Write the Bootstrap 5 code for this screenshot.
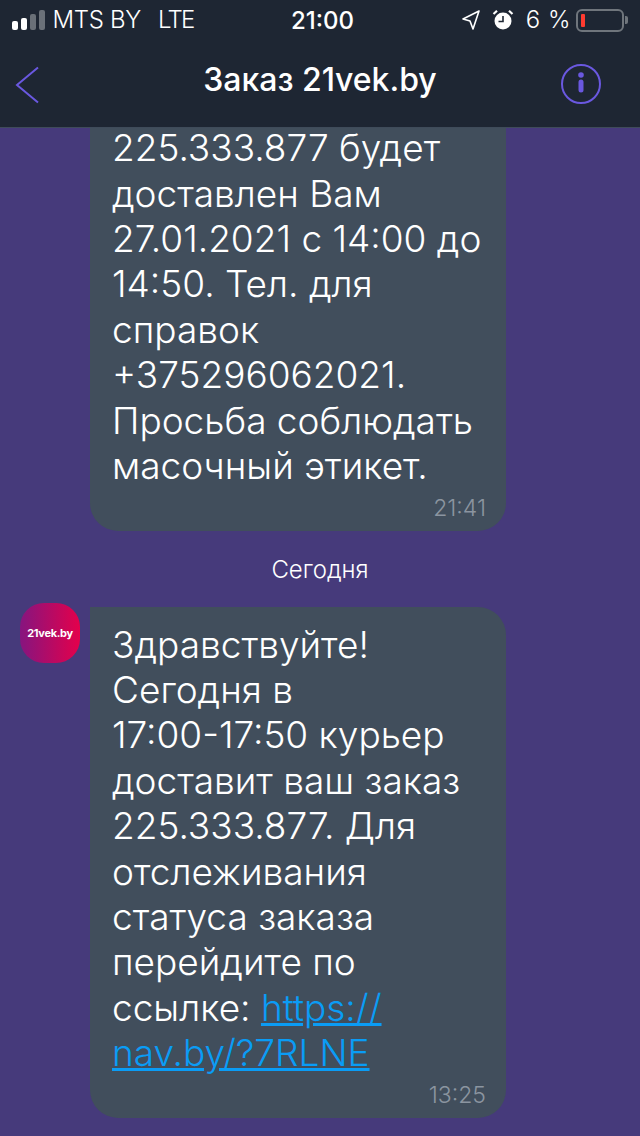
<!DOCTYPE html>
<html lang="ru">
<head>
    <meta charset="UTF-8">
    <meta name="viewport" content="width=device-width, initial-scale=1.0">
    <title>Заказ 21vek.by</title>
    <link href="https://cdn.jsdelivr.net/npm/bootstrap@5.3.0/dist/css/bootstrap.min.css" rel="stylesheet">
    <script src="https://cdn.jsdelivr.net/npm/bootstrap@5.3.0/dist/js/bootstrap.bundle.min.js"></script>
    <style>
        html, body { height: 100%; }
        body { width: 640px; height: 1136px; overflow: hidden; background: #463a7b; font-family: Inter, "Liberation Sans", sans-serif; color: #fff; }
        .top-area { background: #1e2633; height: 128px; border-bottom: 1px solid #3f4b5a; position: relative; z-index: 2; }
        .status-row { height: 40px; padding: 0 12px; font-size: 24px; line-height: 42px; }
        .signal { gap: 3.5px; align-items: flex-end; height: 20px; margin-right: 8px; }
        .signal i { display: block; width: 5.5px; border-radius: 2px; background: #fff; }
        .signal i.off { background: #6a7078; }
        .carrier { letter-spacing: -0.3px; font-weight: 300; }
        .net { margin-left: 17px; font-weight: 300; letter-spacing: -1.8px; }
        .clock { position: absolute; left: 5px; right: 0; text-align: center; font-weight: 500; font-size: 24px; top: 0; line-height: 42px; }
        .status-right { margin-left: auto; gap: 12px; }
        .pct { font-weight: 300; font-size: 24px; letter-spacing: 0.5px; }
        .batt { width: 48px; height: 23px; border: 2px solid #6f757c; border-radius: 6px; padding: 3px; }
        .batt b { display: block; width: 4px; height: 100%; background: #ff3b30; border-radius: 1px; }
        .batt-tip { width: 3px; height: 8px; background: #6f757c; border-radius: 0 2px 2px 0; margin-left: 1px; }
        .batt-group { margin-left: -7px; }
        .nav-row { height: 87px; padding: 0 38px 0 15px; position: relative; }
        .back-arrow { margin-top: 3px; }
        .nav-title { position: absolute; left: 0; right: 0; top: 18px; text-align: center; font-size: 32px; font-weight: 500; line-height: 44px; }
        .chat-area { height: 1008px; overflow: hidden; }
        .msg-row { display: flex; }
        .logo-box { width: 60px; height: 60px; margin: -4px 10px 0 20px; flex: none; background: linear-gradient(90deg, #86157f, #e4004b); border-radius: 24px; font-size: 11px; font-weight: 700; line-height: 60px; text-align: center; letter-spacing: -0.3px; }
        .logo-gap { width: 90px; flex: none; }
        .bubble { width: 416px; background: #414e5c; border-radius: 0 28px 28px 28px; padding: 0 16px 0 22px; font-size: 37px; line-height: 45.4px; font-weight: 300; position: relative; }
        .bubble a { color: #0a9cf5; }
        .first-bubble { height: 403px; border-radius: 0 0 28px 28px; }
        .first-line { display: block; line-height: 40px; margin-bottom: 2.5px; }
        .second-bubble { height: 511px; padding-top: 14.5px; }
        .msg-time { position: absolute; right: 20px; bottom: 9px; font-size: 23px; line-height: 28px; color: #8b95a0; font-weight: 300; }
        .day-label { text-align: center; font-size: 24px; line-height: 28px; margin: 25px 0 23px; font-weight: 300; }
    </style>
</head>
<body>
    <div class="top-area">
        <div class="status-row d-flex align-items-center position-relative">
            <div class="signal d-flex"><i style="height:9px"></i><i style="height:12px"></i><i class="off" style="height:16px"></i><i class="off" style="height:20px"></i></div>
            <span class="carrier">MTS BY</span><span class="net">LTE</span>
            <div class="clock">21:00</div>
            <div class="status-right d-flex align-items-center position-relative">
                <svg width="18" height="20" viewBox="0 0 18 20"><path d="M17 1 1 9l7 2 3 8z" fill="none" stroke="#fff" stroke-width="1.6" stroke-linejoin="round"/></svg>
                <svg width="22" height="22" viewBox="0 0 22 22"><circle cx="11" cy="12" r="8.5" fill="#fff"/><path d="M11 7v5.500H6.500" fill="none" stroke="#1e2633" stroke-width="1.6"/><path d="M1.500 5 5 1.800M20.500 5 17 1.800" stroke="#fff" stroke-width="2.200"/></svg>
                <span class="pct">6 %</span>
                <div class="batt-group d-flex align-items-center">
                    <div class="batt"><b></b></div><div class="batt-tip"></div>
                </div>
            </div>
        </div>
        <div class="nav-row d-flex align-items-center justify-content-between">
            <svg class="back-arrow" width="24" height="38" viewBox="0 0 24 38"><path d="M23 1.500 2 19l21 17.500" fill="none" stroke="#6a58e0" stroke-width="2"/></svg>
            <div class="nav-title">Заказ 21vek.by</div>
            <svg width="42" height="42" viewBox="0 0 42 42"><circle cx="21" cy="21" r="19" fill="none" stroke="#6a58e0" stroke-width="2"/><circle cx="21" cy="12" r="2.800" fill="#6a58e0"/><path d="M21 19v8" stroke="#6a58e0" stroke-width="5" stroke-linecap="round"/></svg>
        </div>
    </div>
    <div class="chat-area">
        <div class="msg-row">
            <div class="logo-gap"></div>
            <div class="bubble first-bubble">
                <span class="first-line">225.333.877 будет</span>доставлен Вам<br>27.01.2021 с 14:00 до<br>14:50. Тел. для<br>справок<br>+375296062021.<br>Просьба соблюдать<br>масочный этикет.
                <div class="msg-time">21:41</div>
            </div>
        </div>
        <div class="day-label">Сегодня</div>
        <div class="msg-row">
            <div class="logo-box">21vek.by</div>
            <div class="bubble second-bubble">
                Здравствуйте!<br>Сегодня в<br>17:00-17:50 курьер<br>доставит ваш заказ<br>225.333.877. Для<br>отслеживания<br>статуса заказа<br>перейдите по<br>ссылке: <a href="#">https://<br>nav.by/?7RLNE</a>
                <div class="msg-time">13:25</div>
            </div>
        </div>
    </div>
</body>
</html>
